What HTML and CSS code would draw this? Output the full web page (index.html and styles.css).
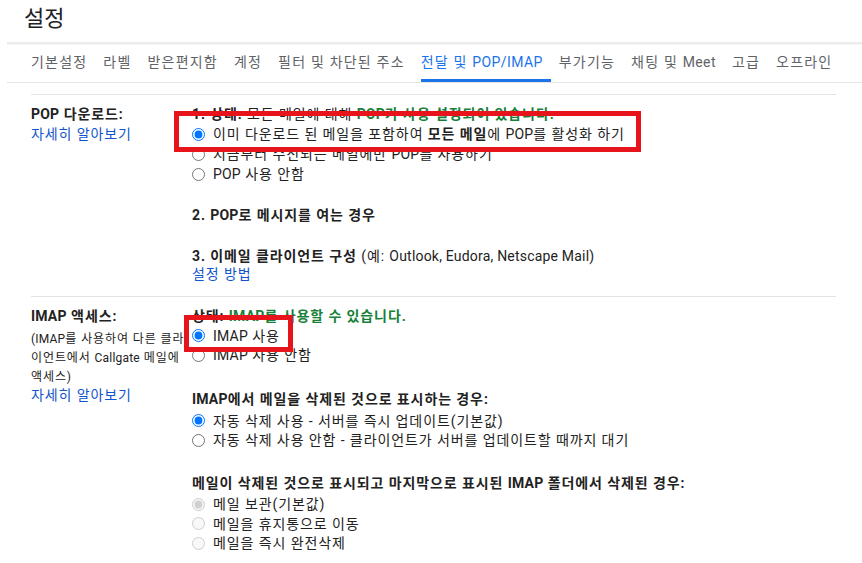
FILE: index.html
```html
<!DOCTYPE html>
<html lang="ko">
<head>
<meta charset="utf-8">
<title>설정</title>
<link rel="stylesheet" href="styles.css">
</head>
<body>
<div class="page">
  <header class="title-bar"><h1>설정</h1></header>
  <nav class="tabs">
    <span class="tab">기본설정</span>
    <span class="tab">라벨</span>
    <span class="tab">받은편지함</span>
    <span class="tab">계정</span>
    <span class="tab">필터 및 차단된 주소</span>
    <span class="tab active">전달 및 <span class="en">POP/IMAP</span></span>
    <span class="tab">부가기능</span>
    <span class="tab">채팅 및 <span class="en">Meet</span></span>
    <span class="tab">고급</span>
    <span class="tab">오프라인</span>
  </nav>

  <div class="content">
    <section class="row pop">
      <div class="label-col">
        <div class="label"><span class="en">POP</span> 다운로드:</div>
        <a class="link">자세히 알아보기</a>
      </div>
      <div class="value-col">
        <div class="line"><b>1. 상태:</b> 모든 메일에 대해 <b class="ok"><span class="en">POP</span>가 사용 설정되어 있습니다.</b></div>
        <label class="opt"><input type="radio" name="pop" checked><span>이미 다운로드 된 메일을 포함하여 <b>모든 메일</b>에 <span class="en">POP</span>를 활성화 하기</span></label>
        <label class="opt"><input type="radio" name="pop"><span>지금부터 수신되는 메일에만 <span class="en">POP</span>를 사용하기</span></label>
        <label class="opt"><input type="radio" name="pop"><span><span class="en">POP</span> 사용 안함</span></label>
        <div class="line step"><b>2. <span class="en">POP</span>로 메시지를 여는 경우</b></div>
        <div class="line step"><b>3. 이메일 클라이언트 구성</b> (예: <span class="en">Outlook, Eudora, Netscape Mail)</span></div>
        <a class="link line setup">설정 방법</a>
      </div>
    </section>

    <section class="row imap">
      <div class="label-col">
        <div class="label"><span class="en">IMAP</span> 액세스:</div>
        <div class="desc"><span class="en">(IMAP</span>를 사용하여 다른 클라<br>이언트에서 <span class="en">Callgate</span> 메일에<br>액세스)</div>
        <a class="link more">자세히 알아보기</a>
      </div>
      <div class="value-col">
        <div class="line"><b>상태:</b> <b class="ok"><span class="en">IMAP</span>를 사용할 수 있습니다.</b></div>
        <label class="opt"><input type="radio" name="imap" checked><span><span class="en">IMAP</span> 사용</span></label>
        <label class="opt"><input type="radio" name="imap"><span><span class="en">IMAP</span> 사용 안함</span></label>
        <div class="line head head1"><b><span class="en">IMAP</span>에서 메일을 삭제된 것으로 표시하는 경우:</b></div>
        <label class="opt"><input type="radio" name="exp" checked><span>자동 삭제 사용 - 서버를 즉시 업데이트(기본값)</span></label>
        <label class="opt"><input type="radio" name="exp"><span>자동 삭제 사용 안함 - 클라이언트가 서버를 업데이트할 때까지 대기</span></label>
        <div class="line head head2"><b>메일이 삭제된 것으로 표시되고 마지막으로 표시된 <span class="en">IMAP</span> 폴더에서 삭제된 경우:</b></div>
        <label class="opt"><input type="radio" name="del" checked disabled><span>메일 보관(기본값)</span></label>
        <label class="opt"><input type="radio" name="del" disabled><span>메일을 휴지통으로 이동</span></label>
        <label class="opt"><input type="radio" name="del" disabled><span>메일을 즉시 완전삭제</span></label>
      </div>
    </section>
  </div>

  <div class="mark mark-pop"></div>
  <div class="mark mark-imap"></div>
</div>
</body>
</html>
```

FILE: styles.css
```css
* { box-sizing: border-box; }
html, body { margin: 0; padding: 0; background: #fff; }
body {
  font-family: Roboto, "Noto Sans CJK KR", sans-serif;
  font-size: 14px;
  color: #222;
  letter-spacing: 0.9px;
}
.en { letter-spacing: 0.2px; }
.page { position: relative; width: 862px; height: 563px; overflow: hidden; }

.title-bar { height: 42px; padding-left: 24px; }
.title-bar h1 {
  margin: 0;
  font-size: 22px;
  font-weight: 400;
  line-height: 38px;
  letter-spacing: 0;
  color: #202124;
}

.tabs {
  margin-left: 7px;
  display: flex;
  gap: 8px;
  padding-left: 24px;
  border-top: 2px solid #ececec;
  border-bottom: 1px solid #e6e6e6;
  box-shadow: inset 0 1px 1px rgba(0,0,0,0.04);
  letter-spacing: 1.2px;
}
.tab {
  padding: 8px 8px 7px 0;
  line-height: 20px;
  color: #5f6368;
  border-bottom: 3px solid transparent;
  white-space: nowrap;
}
.tab .en { letter-spacing: 0.4px; }
.tab.active { color: #1a73e8; border-bottom-color: #1a73e8; }

.content { margin: 11px 0 0 31px; width: 805px; }
.row { display: flex; border-top: 1px solid #e3e3e3; padding-top: 9px; }
.row.pop { padding-bottom: 12px; }
.label-col { width: 161px; flex: none; }
.label { font-weight: 700; line-height: 20px; }
.desc { font-size: 12px; line-height: 19px; margin-top: 3.5px; }
.link { display: block; color: #1155cc; line-height: 20px; cursor: pointer; }
.link.more { margin-top: -1.5px; }

.value-col { flex: 1; }
.line { line-height: 20px; }
.ok { color: #188038; }
.step { margin-top: 21px; }
.setup { margin-top: -2px; }
.head { margin-bottom: 2px; }
.head1 { margin-top: 24px; }
.head2 { margin-top: 22.5px; }

.opt { display: flex; align-items: center; height: 20px; line-height: 20px; white-space: nowrap; }
.imap .opt { height: 19.5px; }
.opt input { margin: 0 8px 0 0; width: 13px; height: 13px; flex: none; }

.mark { position: absolute; border: 5px solid #e8141c; }
.mark-pop { left: 174px; top: 111px; width: 467px; height: 41px; }
.mark-imap { left: 184px; top: 315px; width: 109px; height: 37px; }
```
